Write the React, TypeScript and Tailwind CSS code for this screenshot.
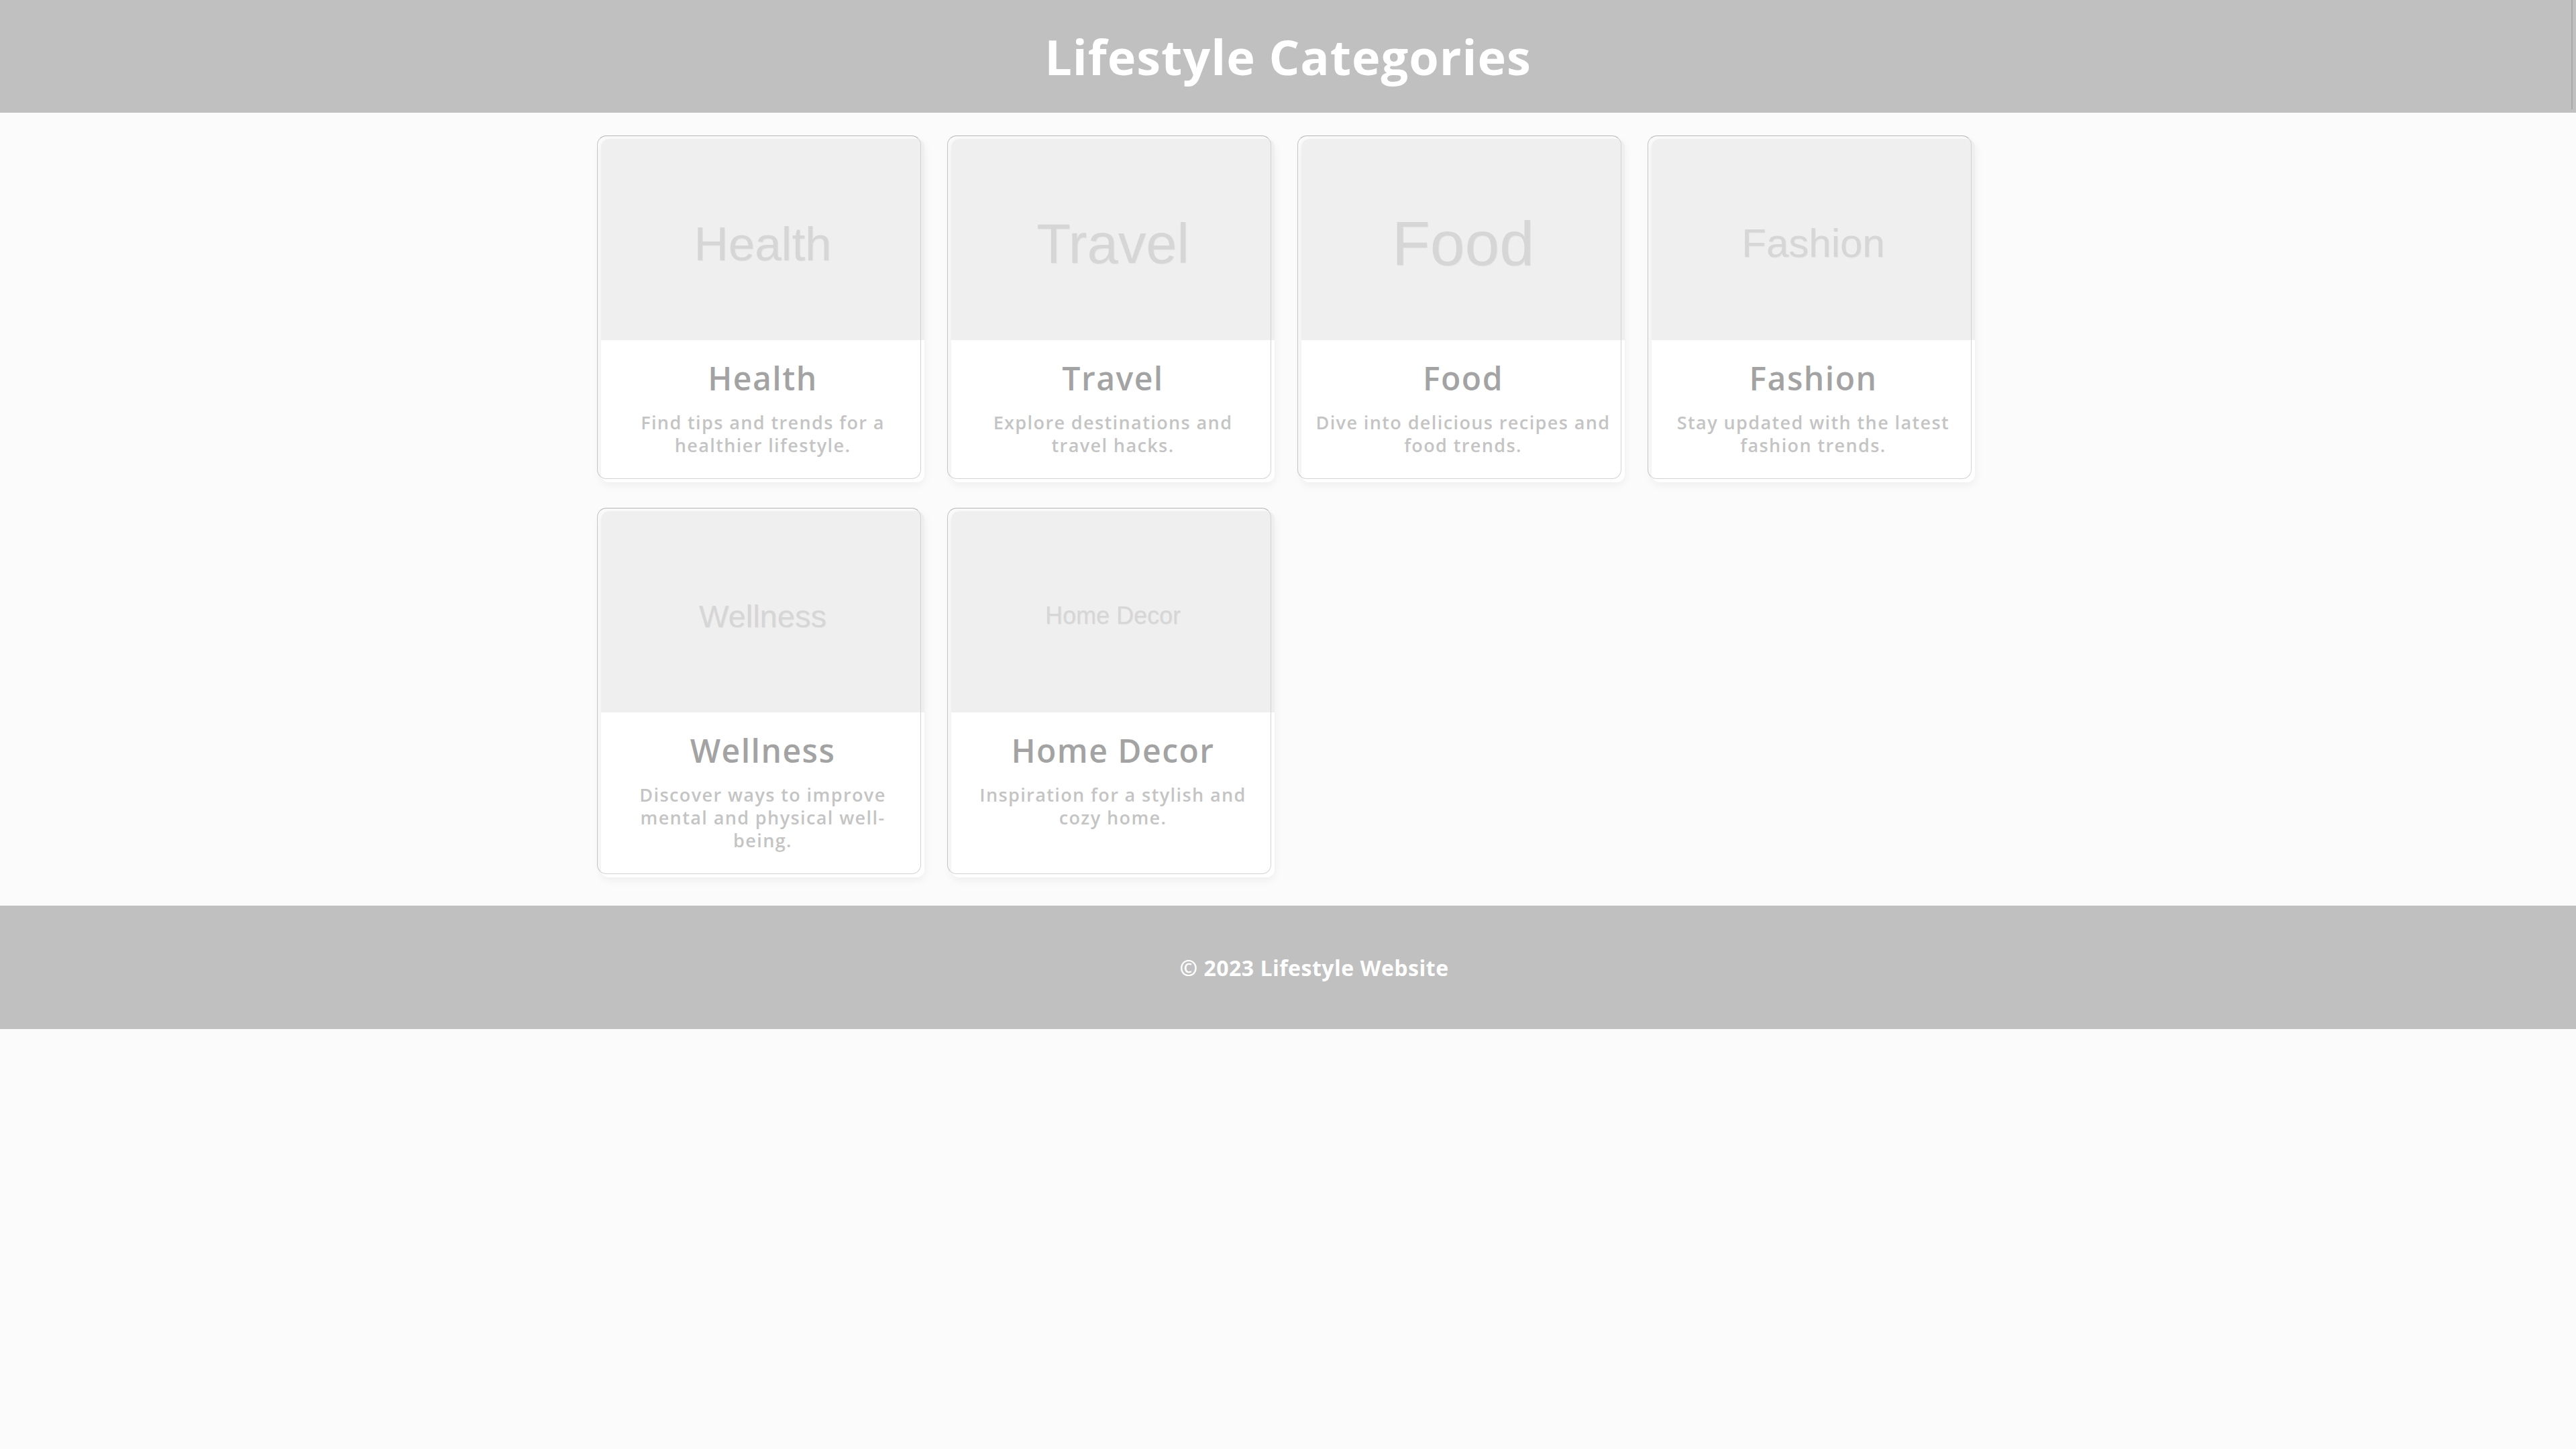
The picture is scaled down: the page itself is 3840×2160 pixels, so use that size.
import React from "react";

type Cat = { name: string; size: string; lines: string[] };

const cats: Cat[] = [
  { name: "Health", size: "text-[71px]", lines: ["Find tips and trends for a", "healthier lifestyle."] },
  { name: "Travel", size: "text-[83px]", lines: ["Explore destinations and", "travel hacks."] },
  { name: "Food", size: "text-[93px]", lines: ["Dive into delicious recipes and", "food trends."] },
  { name: "Fashion", size: "text-[60px]", lines: ["Stay updated with the latest", "fashion trends."] },
  { name: "Wellness", size: "text-[47px]", lines: ["Discover ways to improve", "mental and physical well-", "being."] },
  { name: "Home Decor", size: "text-[36px]", lines: ["Inspiration for a stylish and", "cozy home."] },
];

function Card({ c }: { c: Cat }) {
  return (
    <div className="relative flex flex-col rounded-[12px] bg-white shadow-[0_4px_14px_rgba(0,0,0,0.06)]">
      <div className="flex h-[300px] items-center justify-center rounded-t-[12px] bg-[#efefef] pt-[12px]">
        <span
          className={`${c.size} text-[#d6d6d6] [text-shadow:1px_1px_1px_rgba(0,0,0,0.05)] font-['Liberation_Sans',Arial,sans-serif] leading-none`}
        >
          {c.name}
        </span>
      </div>
      <div className="flex flex-1 flex-col items-center px-[16px] pb-[38px] pt-[28px] text-center">
        <h2 className="text-[48px] font-semibold leading-[58px] tracking-[1.5px] text-[#a3a3a3]">{c.name}</h2>
        <p className="mt-[20px] text-[27px] font-semibold leading-[34px] tracking-[1.4px] text-[#c4c4c4]">
          {c.lines.map((l, i) => (
            <span key={i} className="block whitespace-nowrap">
              {l}
            </span>
          ))}
        </p>
      </div>
      <div className="pointer-events-none absolute -left-[6px] -top-[5px] right-[5px] bottom-[5px] rounded-[14px] border border-[#d2d2d2] border-t-[#b6b6b6] border-l-[#c4c4c4]" />
    </div>
  );
}

export default function App() {
  return (
    <div className="min-h-screen bg-[#fbfbfb] font-['Open_Sans',sans-serif]">
      <header className="relative flex h-[168px] items-center justify-center bg-[#c0c0c0]">
        <h1 className="text-[72px] font-bold tracking-[1px] text-white">Lifestyle Categories</h1>
        <span className="absolute right-[5px] top-0 h-[163px] w-[2px] bg-[#a9a9a9]" />
      </header>
      <main className="flex justify-center pb-[42px] pt-[39px]">
        <div className="grid w-[2048px] grid-cols-[repeat(4,482px)] gap-x-[40px] gap-y-[43px]">
          {cats.map((c) => (
            <Card key={c.name} c={c} />
          ))}
        </div>
      </main>
      <footer className="flex h-[184px] items-center justify-center bg-[#c0c0c0] pl-[78px] pt-[2px]">
        <p className="text-[32px] font-bold tracking-[0.5px] text-white">© 2023 Lifestyle Website</p>
      </footer>
    </div>
  );
}
